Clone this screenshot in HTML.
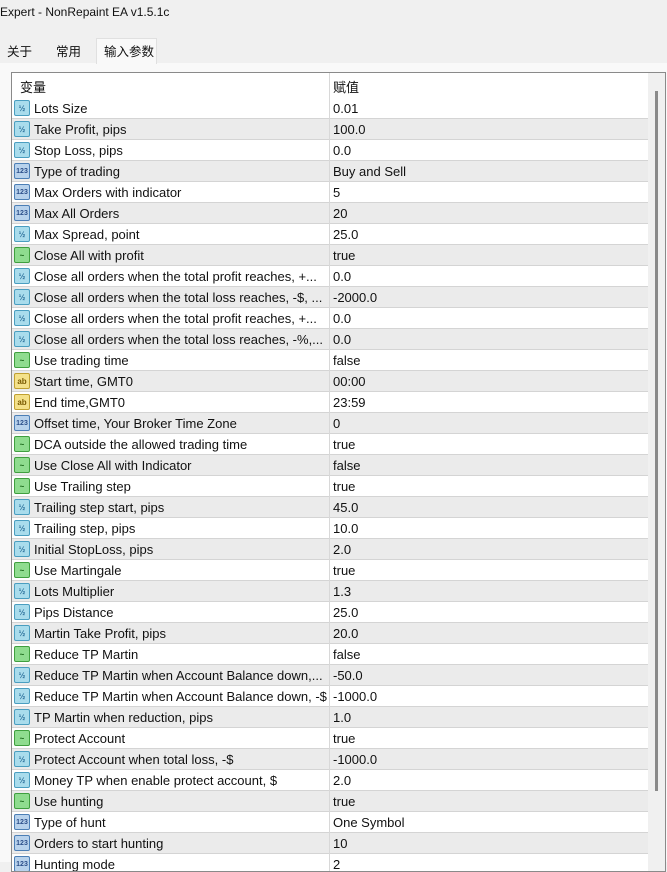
<!DOCTYPE html>
<html><head><meta charset="utf-8"><style>
*{margin:0;padding:0;box-sizing:border-box}
body{width:667px;height:862px;overflow:hidden;background:#f0f0f0;font-family:"Liberation Sans","Noto Sans CJK SC",sans-serif;font-size:13px;color:#111;position:relative}
.title{position:absolute;left:0;top:5px;font-size:12px}
.tab{position:absolute;top:40px;height:23px;font-size:12.5px;padding:1px 0 0 7px}
.panel{position:absolute;left:0;top:63px;width:667px;height:799px;background:#f9f9f9}
.tbl{position:absolute;left:11px;top:72px;width:655px;height:800px;border:1px solid #8a8a8a;background:#fff;overflow:hidden}
.hdr{position:absolute;left:0;top:0;width:636px;height:25px;background:#fff}
.hdr span{position:absolute;top:4px}
.rows{position:absolute;left:0;top:25px;width:636px}
.r{height:21px;position:relative;border-bottom:1px solid #d4d4d4;background:#fff}
.r:nth-child(even){background:#ebebeb}
.r .n{position:absolute;left:22px;top:3px;white-space:nowrap}
.r .v{position:absolute;left:321px;top:3px}
.div{position:absolute;left:317px;top:0;width:1px;height:800px;background:#d8d8d8}
.ic{position:absolute;left:2px;top:2px;width:16px;height:16px;border-radius:2px;font-size:8px;line-height:15px;text-align:center;font-weight:bold}
.d{background:#a9dcec;border:1px solid #4a9ec0;color:#2a6f9a}
.i{background:#b8d2ec;border:1px solid #4c7fb6;color:#2c4f8a;font-size:7px}
.b{background:#8fdc8f;border:1px solid #3f9f3f;color:#1d6b1d}
.s{background:#f4e18a;border:1px solid #c0a030;color:#7a5a00}
.sb{position:absolute;left:636px;top:0;width:17px;height:800px;background:#f0f0f0}
.th{position:absolute;left:7px;top:18px;width:3px;height:700px;background:#8a8a8a}
</style></head><body>
<div class="title">Expert - NonRepaint EA v1.5.1c</div>
<div class="tab" style="left:0;width:48px">关于</div>
<div class="tab" style="left:49px;width:46px">常用</div>
<div class="panel"></div>
<div class="tab" style="left:96px;width:61px;background:#f9f9f9;border:1px solid #e0e0e0;border-bottom:none;top:38px;height:26px;padding-top:2px">输入参数</div>
<div class="tbl">
<div class="hdr"><span style="left:8px">变量</span><span style="left:321px">赋值</span></div>
<div class="rows">
<div class="r"><span class="ic d">½</span><span class="n">Lots Size</span><span class="v">0.01</span></div>
<div class="r"><span class="ic d">½</span><span class="n">Take Profit, pips</span><span class="v">100.0</span></div>
<div class="r"><span class="ic d">½</span><span class="n">Stop Loss, pips</span><span class="v">0.0</span></div>
<div class="r"><span class="ic i">123</span><span class="n">Type of trading</span><span class="v">Buy and Sell</span></div>
<div class="r"><span class="ic i">123</span><span class="n">Max Orders with indicator</span><span class="v">5</span></div>
<div class="r"><span class="ic i">123</span><span class="n">Max All Orders</span><span class="v">20</span></div>
<div class="r"><span class="ic d">½</span><span class="n">Max Spread, point</span><span class="v">25.0</span></div>
<div class="r"><span class="ic b">~</span><span class="n">Close All with profit</span><span class="v">true</span></div>
<div class="r"><span class="ic d">½</span><span class="n">Close all orders when the total profit reaches, +...</span><span class="v">0.0</span></div>
<div class="r"><span class="ic d">½</span><span class="n">Close all orders when the total loss reaches, -$, ...</span><span class="v">-2000.0</span></div>
<div class="r"><span class="ic d">½</span><span class="n">Close all orders when the total profit reaches, +...</span><span class="v">0.0</span></div>
<div class="r"><span class="ic d">½</span><span class="n">Close all orders when the total loss reaches, -%,...</span><span class="v">0.0</span></div>
<div class="r"><span class="ic b">~</span><span class="n">Use trading time</span><span class="v">false</span></div>
<div class="r"><span class="ic s">ab</span><span class="n">Start time, GMT0</span><span class="v">00:00</span></div>
<div class="r"><span class="ic s">ab</span><span class="n">End time,GMT0</span><span class="v">23:59</span></div>
<div class="r"><span class="ic i">123</span><span class="n">Offset time, Your Broker Time Zone</span><span class="v">0</span></div>
<div class="r"><span class="ic b">~</span><span class="n">DCA outside the allowed trading time</span><span class="v">true</span></div>
<div class="r"><span class="ic b">~</span><span class="n">Use Close All with Indicator</span><span class="v">false</span></div>
<div class="r"><span class="ic b">~</span><span class="n">Use Trailing step</span><span class="v">true</span></div>
<div class="r"><span class="ic d">½</span><span class="n">Trailing step start, pips</span><span class="v">45.0</span></div>
<div class="r"><span class="ic d">½</span><span class="n">Trailing step, pips</span><span class="v">10.0</span></div>
<div class="r"><span class="ic d">½</span><span class="n">Initial StopLoss, pips</span><span class="v">2.0</span></div>
<div class="r"><span class="ic b">~</span><span class="n">Use Martingale</span><span class="v">true</span></div>
<div class="r"><span class="ic d">½</span><span class="n">Lots Multiplier</span><span class="v">1.3</span></div>
<div class="r"><span class="ic d">½</span><span class="n">Pips Distance</span><span class="v">25.0</span></div>
<div class="r"><span class="ic d">½</span><span class="n">Martin Take Profit, pips</span><span class="v">20.0</span></div>
<div class="r"><span class="ic b">~</span><span class="n">Reduce TP Martin</span><span class="v">false</span></div>
<div class="r"><span class="ic d">½</span><span class="n">Reduce TP Martin when Account Balance down,...</span><span class="v">-50.0</span></div>
<div class="r"><span class="ic d">½</span><span class="n">Reduce TP Martin when Account Balance down, -$</span><span class="v">-1000.0</span></div>
<div class="r"><span class="ic d">½</span><span class="n">TP Martin when reduction, pips</span><span class="v">1.0</span></div>
<div class="r"><span class="ic b">~</span><span class="n">Protect Account</span><span class="v">true</span></div>
<div class="r"><span class="ic d">½</span><span class="n">Protect Account when total loss, -$</span><span class="v">-1000.0</span></div>
<div class="r"><span class="ic d">½</span><span class="n">Money TP when enable protect account, $</span><span class="v">2.0</span></div>
<div class="r"><span class="ic b">~</span><span class="n">Use hunting</span><span class="v">true</span></div>
<div class="r"><span class="ic i">123</span><span class="n">Type of hunt</span><span class="v">One Symbol</span></div>
<div class="r"><span class="ic i">123</span><span class="n">Orders to start hunting</span><span class="v">10</span></div>
<div class="r"><span class="ic i">123</span><span class="n">Hunting mode</span><span class="v">2</span></div>
</div>
<div class="div"></div>
<div class="sb"><div class="th"></div></div>
</div>
</body></html>
